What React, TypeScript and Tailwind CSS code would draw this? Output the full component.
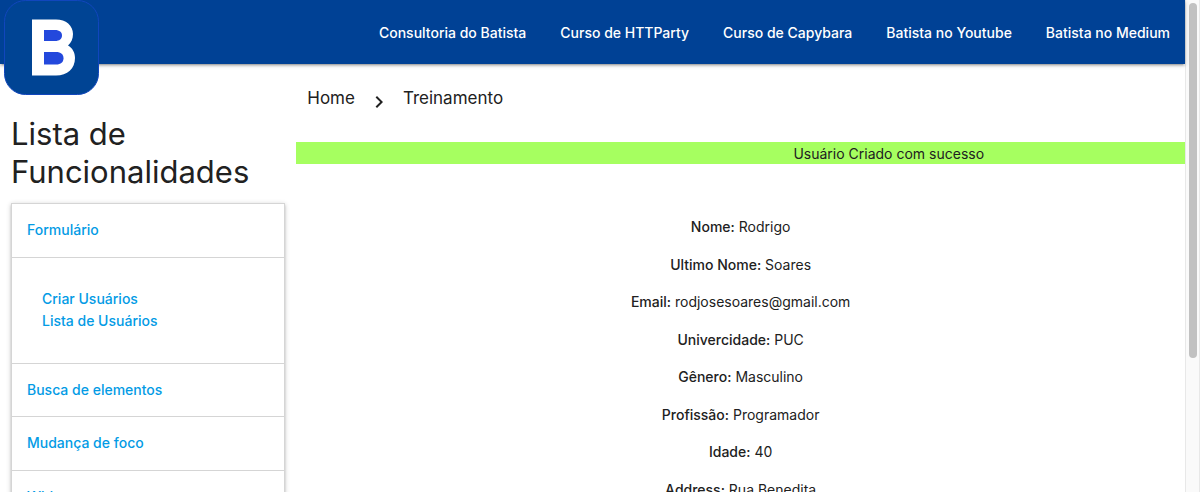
import React from "react";

const navLinks = [
  "Consultoria do Batista",
  "Curso de HTTParty",
  "Curso de Capybara",
  "Batista no Youtube",
  "Batista no Medium",
];

const sections = [
  { title: "Formulário", items: ["Criar Usuários", "Lista de Usuários"] },
  { title: "Busca de elementos", items: [] },
  { title: "Mudança de foco", items: [] },
  { title: "Widgets", items: [] },
];

const user = [
  ["Nome:", "Rodrigo"],
  ["Ultimo Nome:", "Soares"],
  ["Email:", "rodjosesoares@gmail.com"],
  ["Univercidade:", "PUC"],
  ["Gênero:", "Masculino"],
  ["Profissão:", "Programador"],
  ["Idade:", "40"],
  ["Address:", "Rua Benedita"],
];

function Logo() {
  return (
    <svg viewBox="0 0 95 95" className="size-[95px]" role="img" aria-label="Batista">
      <rect x="0.5" y="0.5" width="94" height="94" rx="21" fill="#004494" stroke="#1146bd" />
      <path
        fill="#fff"
        d="M28 19.500H52C62 19.500 69 25.500 69 34C69 39 67 43 64 45.500C68.500 48 71 52.500 71 58C71 68.500 63.500 75.500 52 75.500H28Z"
      />
      <path fill="#2348dc" d="M40 30H51C55.500 30 58 32.300 58 35.500C58 38.800 55.500 41 51 41H40Z" />
      <path fill="#2348dc" d="M40 52H52C57 52 59.500 54.500 59.500 58.200C59.500 62 57 64.500 52 64.500H40Z" />
    </svg>
  );
}

function Header() {
  return (
    <header className="relative z-10 flex h-16 shrink-0 items-center justify-end bg-[#004195] pt-0.5 shadow-[0_2px_2px_0_rgba(0,0,0,0.14),0_3px_1px_-2px_rgba(0,0,0,0.12),0_1px_5px_0_rgba(0,0,0,0.2)]">
      <a href="#" className="absolute top-0 left-1">
        <Logo />
      </a>
      <nav>
        <ul className="flex gap-1">
          {navLinks.map((label) => (
            <li key={label}>
              <a href="#" className="block px-[15px] leading-[62px] font-medium text-white">
                {label}
              </a>
            </li>
          ))}
        </ul>
      </nav>
    </header>
  );
}

function Sidebar() {
  return (
    <aside className="w-1/4 px-[11px] pt-[51px]">
      <h1 className="mb-3 text-[31px] leading-[38px]">Lista de Funcionalidades</h1>
      <ul className="border border-b-0 border-[#d5d5d5] text-[15px] leading-normal shadow-[0_2px_2px_0_rgba(0,0,0,0.14),0_3px_1px_-2px_rgba(0,0,0,0.12),0_1px_5px_0_rgba(0,0,0,0.2)]">
        {sections.map((section) => (
          <li key={section.title}>
            <div className="border-b border-[#d5d5d5] p-[15px]">
              <a href="#" className="text-sm leading-[inherit] font-medium text-[#039be5]">
                {section.title}
              </a>
            </div>
            {section.items.length > 0 && (
              <ul className="border-b border-[#d5d5d5] p-[30px]">
                {section.items.map((item) => (
                  <li key={item}>
                    <a href="#" className="text-sm leading-[inherit] font-medium text-[#039be5]">
                      {item}
                    </a>
                  </li>
                ))}
              </ul>
            )}
          </li>
        ))}
      </ul>
    </aside>
  );
}

function Main() {
  return (
    <main className="w-3/4">
      <nav aria-label="Breadcrumb" className="flex items-center px-[11px] pt-[18px] text-[17px] leading-7">
        <a href="#">Home</a>
        <svg viewBox="0 0 24 24" className="mx-3 mt-2 size-6" fill="currentColor" aria-hidden="true">
          <path d="M10 6 8.590 7.410 13.170 12l-4.580 4.590L10 18l6-6z" />
        </svg>
        <a href="#">Treinamento</a>
      </nav>
      <p role="status" className="mt-7 bg-[#a6ff60] pt-0.5 pl-[33.333%] text-center leading-5">
        Usuário Criado com sucesso
      </p>
      <div className="mt-[52px] flex flex-col gap-[15px] text-center text-[15px] leading-normal">
        {user.map(([label, value]) => (
          <p key={label}>
            <span className="text-sm leading-[inherit]">
              <strong className="font-medium">{label}</strong> {value}
            </span>
          </p>
        ))}
      </div>
    </main>
  );
}

export default function App() {
  return (
    <div className="flex h-screen overflow-hidden bg-white font-['Inter',sans-serif] text-sm text-[#212121]">
      <div className="flex min-w-0 flex-1 flex-col">
        <Header />
        <div className="flex">
          <Sidebar />
          <Main />
        </div>
      </div>
      <div aria-hidden="true" className="w-[15px] shrink-0 border-x border-[#e8e8e8] bg-[#fafafa] py-[3px] pl-[3px]">
        <div className="h-[73%] w-2 rounded-full bg-[#c1c1c1]" />
      </div>
    </div>
  );
}
